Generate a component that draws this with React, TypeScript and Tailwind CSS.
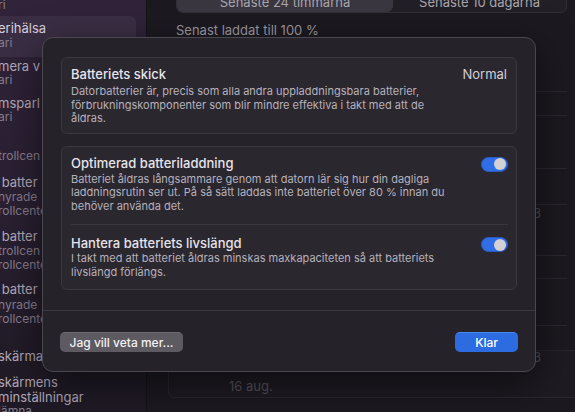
import React from "react";

const font = { fontFamily: "Inter, 'Noto Sans', sans-serif" };

interface ISideLine {
  text: string;
  kind: "title" | "sub" | "active";
  gap: string;
}

const lines: ISideLine[] = [
  { text: "mera v", kind: "title", gap: "mt-[2px]" },
  { text: "ari", kind: "sub", gap: "" },
  { text: "msparl", kind: "title", gap: "mt-[9px]" },
  { text: "ari", kind: "sub", gap: "" },
  { text: "trollcen", kind: "sub", gap: "mt-[25px]" },
  { text: " batter", kind: "title", gap: "mt-[12px]" },
  { text: "nyrade", kind: "sub", gap: "mt-[1px]" },
  { text: "rollcente", kind: "sub", gap: "" },
  { text: " batter", kind: "title", gap: "mt-[11px]" },
  { text: "trollcen", kind: "sub", gap: "mt-[1px]" },
  { text: "rollcente", kind: "sub", gap: "" },
  { text: " batter", kind: "title", gap: "mt-[10px]" },
  { text: "nyrade", kind: "sub", gap: "mt-[2px]" },
  { text: "rollcente", kind: "sub", gap: "" },
  { text: "skärma", kind: "title", gap: "mt-[23px]" },
  { text: "skärmens", kind: "title", gap: "mt-[12px]" },
  { text: "minställningar", kind: "title", gap: "mt-[1px]" },
  { text: "lämna", kind: "sub", gap: "" },
];

const SideLine: React.FC<{ line: ISideLine }> = ({ line }) => {
  const color =
    line.kind === "active"
      ? "text-[#d8d0de] text-[13px]"
      : line.kind === "title"
      ? "text-[#b3aab9] text-[13px]"
      : "text-[#877d8e] text-[12px]";
  return (
    <div className={`h-[14px] shrink-0 leading-[14px] whitespace-pre -ml-[2px] ${color} ${line.gap}`}>
      {line.text}
    </div>
  );
};

const Toggle = () => (
  <div className="mt-[2px] flex h-[15px] w-[27px] shrink-0 items-center justify-end rounded-full border border-[#2a5cc0] bg-[#2f6ee6] pr-[1px]">
    <div className="h-[12px] w-[12px] rounded-full bg-[#d2d1d4]" />
  </div>
);

export default function App() {
  return (
    <div style={font} className="relative flex h-[412px] w-[575px] overflow-hidden bg-[#1c1a20]">
      {/* sidebar */}
      <div className="flex w-[147px] shrink-0 flex-col overflow-hidden border-r border-[#151318] bg-gradient-to-b from-[#30233a] via-[#2a2032] to-[#1f1a25]">
        <div className="-mt-[2px] shrink-0">
          <SideLine line={{ text: "ri", kind: "sub", gap: "" }} />
        </div>
        <div className="mt-[4px] mr-[10px] h-[41px] shrink-0 rounded-r-[6px] bg-[#3a2e44] pt-[5px]">
          <SideLine line={{ text: "erihälsa", kind: "active", gap: "" }} />
          <SideLine line={{ text: "ari", kind: "sub", gap: "mt-[1px]" }} />
        </div>
        {lines.map((l, i) => (
          <SideLine key={i} line={l} />
        ))}
      </div>

      {/* main */}
      <div className="flex flex-1 flex-col pl-[29px] pr-[8px]">
        <div className="-mt-[11px] flex h-[24px] shrink-0 rounded-[6px] border border-[#312e36] bg-[#222026]">
          <div className="flex w-[216px] items-center justify-center rounded-[6px] bg-[#3a3740] pt-[3px] text-[13px] text-[#a9a5ae]">
            Senaste 24 timmarna
          </div>
          <div className="flex flex-1 items-center justify-center pt-[3px] text-[13px] text-[#a9a5ae]">
            Senaste 10 dagarna
          </div>
        </div>
        <div className="mt-[9px] h-[16px] shrink-0 text-[13px] leading-[16px] text-[#9d99a2]">
          Senast laddat till 100 %
        </div>
        <div className="mt-[53px] flex shrink-0 flex-col">
          <div className="h-[24px] border-t border-[#2b2830]" />
          <div className="h-[53px] border-t border-[#2b2830]" />
          <div className="h-[36px] border-t border-[#2b2830]" />
          <div className="flex h-[51px] items-start border-t border-[#2b2830]">
            <span className="ml-auto mr-[26px] mt-[-1px] text-[13px] text-[#4d4953]">3</span>
          </div>
          <div className="h-[23px] border-t border-[#2b2830]" />
          <div className="h-[47px] border-t border-[#2b2830]" />
          <div className="flex h-[25px] items-start border-t border-[#2b2830]">
            <span className="relative z-10 ml-auto mr-[26px] mt-[22px] text-[13px] text-[#4d4953]">3</span>
          </div>
        </div>
        <div className="-ml-[8px] -mr-[20px] h-[48px] shrink-0 rounded-[6px] border border-[#2a272f] bg-[#1e1b22] pl-[60px] pt-[26px] text-[13px] text-[#56525b]">
          16 aug.
        </div>
      </div>

      {/* dialog */}
      <div className="absolute left-[42px] top-[37px] z-20 flex h-[335px] w-[494px] flex-col rounded-[11px] border border-[#4b4751] bg-[#25222a] shadow-[0_12px_40px_rgba(0,0,0,0.55)]">
        <div className="px-[18px] pt-[19px]">
          <div className="rounded-[6px] border border-[#3a3740] bg-[#2a272f] px-[9px] pb-[7px] pt-[8px]">
            <div className="flex h-[16px] items-center justify-between text-[13px] leading-[16px]">
              <span className="font-medium text-[#e7e4ea]">Batteriets skick</span>
              <span className="text-[#d3cfd7]">Normal</span>
            </div>
            <div className="mt-[3px] text-[11px] leading-[13.5px] text-[#b6b1bb]">
              Datorbatterier är, precis som alla andra uppladdningsbara batterier,
              <br />
              förbrukningskomponenter som blir mindre effektiva i takt med att de
              <br />
              åldras.
            </div>
          </div>

          <div className="mt-[12px] rounded-[6px] border border-[#3a3740] bg-[#2a272f] pb-[10px] pt-[8px]">
            <div className="flex items-start justify-between pl-[9px] pr-[8px]">
              <div>
                <div className="h-[16px] text-[13px] font-medium leading-[16px] text-[#e7e4ea]">
                  Optimerad batteriladdning
                </div>
                <div className="mt-[2px] text-[11px] leading-[13.5px] text-[#b6b1bb]">
                  Batteriet åldras långsammare genom att datorn lär sig hur din dagliga
                  <br />
                  laddningsrutin ser ut. På så sätt laddas inte batteriet över 80 % innan du
                  <br />
                  behöver använda det.
                </div>
              </div>
              <Toggle />
            </div>
            <div className="ml-[9px] mr-[8px] mt-[11px] h-px bg-[#3a3740]" />
            <div className="mt-[10px] flex items-start justify-between pl-[9px] pr-[8px]">
              <div>
                <div className="h-[16px] text-[13px] font-medium leading-[16px] text-[#e7e4ea]">
                  Hantera batteriets livslängd
                </div>
                <div className="mt-[1px] text-[11px] leading-[13.5px] text-[#b6b1bb]">
                  I takt med att batteriet åldras minskas maxkapaciteten så att batteriets
                  <br />
                  livslängd förlängs.
                </div>
              </div>
              <Toggle />
            </div>
          </div>
        </div>

        <div className="mt-[20px] h-px bg-[#3a3740]" />

        <div className="mt-[21px] flex items-center justify-between px-[17px]">
          <button className="h-[20px] w-[123px] rounded-[5px] border-t border-[#6e6b73] bg-[#5d5a62] text-[12px] font-medium leading-[18px] text-[#f2f1f3]">
            Jag vill veta mer...
          </button>
          <button className="h-[20px] w-[63px] rounded-[5px] border-t border-[#4a86f0] bg-[#2c6be0] text-[12px] font-medium leading-[18px] text-white">
            Klar
          </button>
        </div>
      </div>
    </div>
  );
}
